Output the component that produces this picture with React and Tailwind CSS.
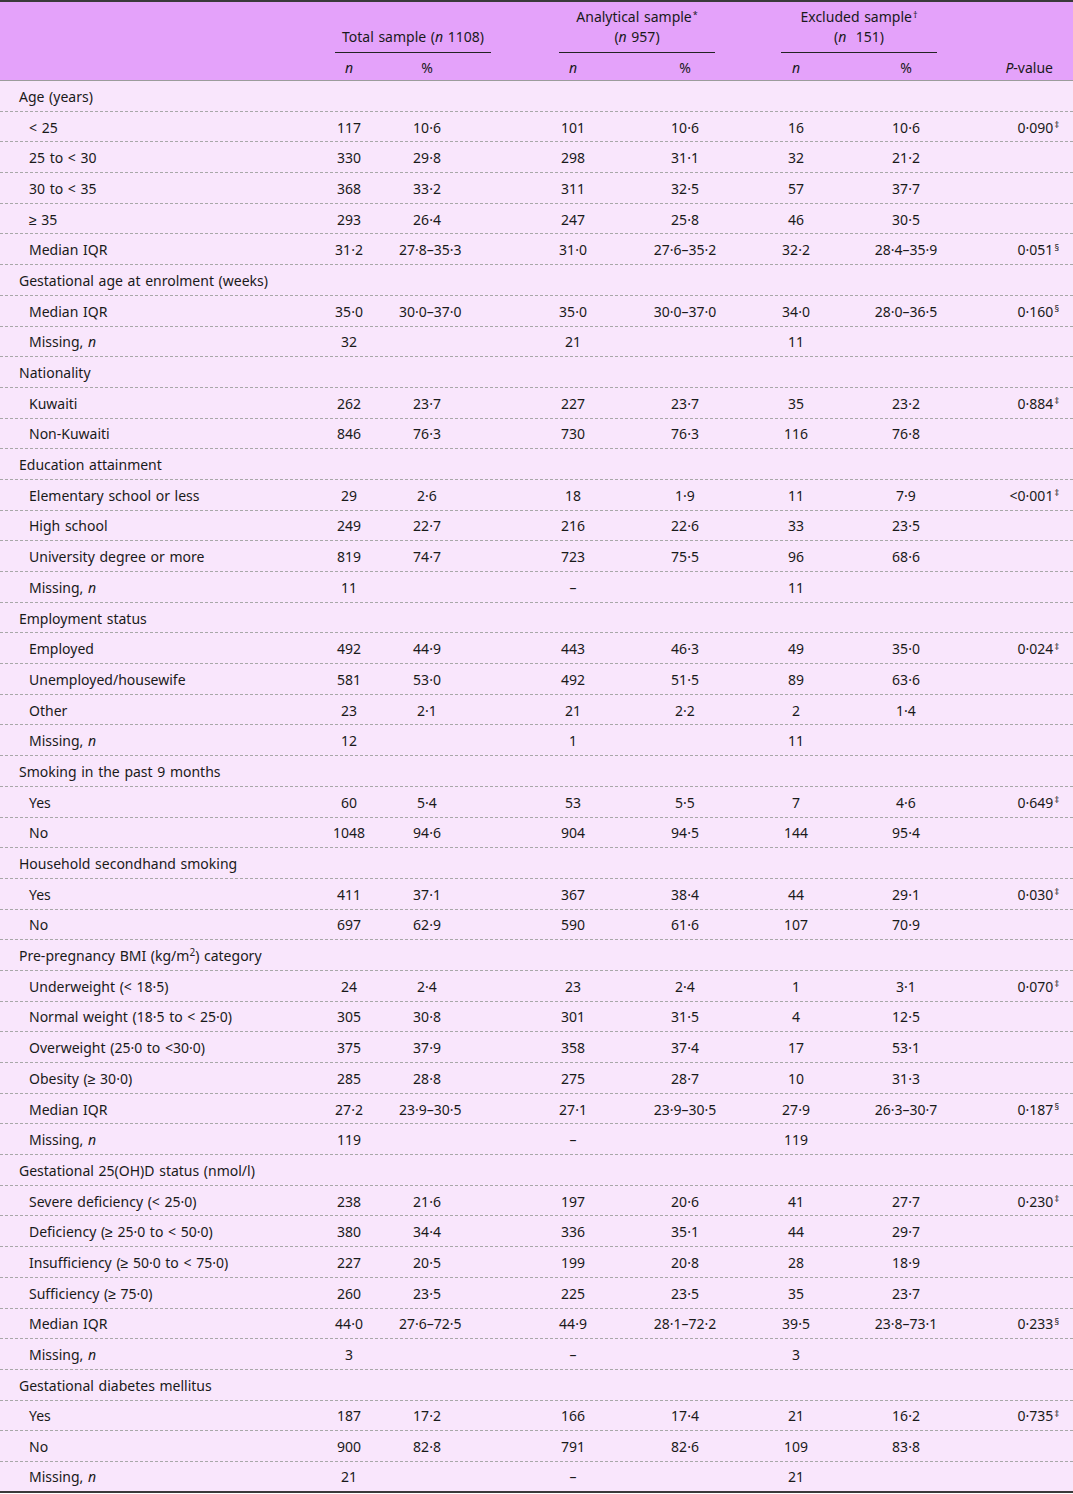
import React from 'react';

// Sociodemographic table: total, analytical and excluded samples.
const rows = [
  { label: 'Age (years)', head: true },
  { label: '< 25', v: ['117', '10·6', '101', '10·6', '16', '10·6'], p: '0·090', sup: '‡' },
  { label: '25 to < 30', v: ['330', '29·8', '298', '31·1', '32', '21·2'] },
  { label: '30 to < 35', v: ['368', '33·2', '311', '32·5', '57', '37·7'] },
  { label: '≥ 35', v: ['293', '26·4', '247', '25·8', '46', '30·5'] },
  { label: 'Median IQR', v: ['31·2', '27·8–35·3', '31·0', '27·6–35·2', '32·2', '28·4–35·9'], p: '0·051', sup: '§' },
  { label: 'Gestational age at enrolment (weeks)', head: true },
  { label: 'Median IQR', v: ['35·0', '30·0–37·0', '35·0', '30·0–37·0', '34·0', '28·0–36·5'], p: '0·160', sup: '§' },
  { label: 'Missing, ', italic: 'n', v: ['32', '', '21', '', '11', ''] },
  { label: 'Nationality', head: true },
  { label: 'Kuwaiti', v: ['262', '23·7', '227', '23·7', '35', '23·2'], p: '0·884', sup: '‡' },
  { label: 'Non-Kuwaiti', v: ['846', '76·3', '730', '76·3', '116', '76·8'] },
  { label: 'Education attainment', head: true },
  { label: 'Elementary school or less', v: ['29', '2·6', '18', '1·9', '11', '7·9'], p: '<0·001', sup: '‡' },
  { label: 'High school', v: ['249', '22·7', '216', '22·6', '33', '23·5'] },
  { label: 'University degree or more', v: ['819', '74·7', '723', '75·5', '96', '68·6'] },
  { label: 'Missing, ', italic: 'n', v: ['11', '', '–', '', '11', ''] },
  { label: 'Employment status', head: true },
  { label: 'Employed', v: ['492', '44·9', '443', '46·3', '49', '35·0'], p: '0·024', sup: '‡' },
  { label: 'Unemployed/housewife', v: ['581', '53·0', '492', '51·5', '89', '63·6'] },
  { label: 'Other', v: ['23', '2·1', '21', '2·2', '2', '1·4'] },
  { label: 'Missing, ', italic: 'n', v: ['12', '', '1', '', '11', ''] },
  { label: 'Smoking in the past 9 months', head: true },
  { label: 'Yes', v: ['60', '5·4', '53', '5·5', '7', '4·6'], p: '0·649', sup: '‡' },
  { label: 'No', v: ['1048', '94·6', '904', '94·5', '144', '95·4'] },
  { label: 'Household secondhand smoking', head: true },
  { label: 'Yes', v: ['411', '37·1', '367', '38·4', '44', '29·1'], p: '0·030', sup: '‡' },
  { label: 'No', v: ['697', '62·9', '590', '61·6', '107', '70·9'] },
  { label: 'bmi', head: true },
  { label: 'Underweight (< 18·5)', v: ['24', '2·4', '23', '2·4', '1', '3·1'], p: '0·070', sup: '‡' },
  { label: 'Normal weight (18·5 to < 25·0)', v: ['305', '30·8', '301', '31·5', '4', '12·5'] },
  { label: 'Overweight (25·0 to <30·0)', v: ['375', '37·9', '358', '37·4', '17', '53·1'] },
  { label: 'Obesity (≥ 30·0)', v: ['285', '28·8', '275', '28·7', '10', '31·3'] },
  { label: 'Median IQR', v: ['27·2', '23·9–30·5', '27·1', '23·9–30·5', '27·9', '26·3–30·7'], p: '0·187', sup: '§' },
  { label: 'Missing, ', italic: 'n', v: ['119', '', '–', '', '119', ''] },
  { label: 'Gestational 25(OH)D status (nmol/l)', head: true },
  { label: 'Severe deficiency (< 25·0)', v: ['238', '21·6', '197', '20·6', '41', '27·7'], p: '0·230', sup: '‡' },
  { label: 'Deficiency (≥ 25·0 to < 50·0)', v: ['380', '34·4', '336', '35·1', '44', '29·7'] },
  { label: 'Insufficiency (≥ 50·0 to < 75·0)', v: ['227', '20·5', '199', '20·8', '28', '18·9'] },
  { label: 'Sufficiency (≥ 75·0)', v: ['260', '23·5', '225', '23·5', '35', '23·7'] },
  { label: 'Median IQR', v: ['44·0', '27·6–72·5', '44·9', '28·1–72·2', '39·5', '23·8–73·1'], p: '0·233', sup: '§' },
  { label: 'Missing, ', italic: 'n', v: ['3', '', '–', '', '3', ''] },
  { label: 'Gestational diabetes mellitus', head: true },
  { label: 'Yes', v: ['187', '17·2', '166', '17·4', '21', '16·2'], p: '0·735', sup: '‡' },
  { label: 'No', v: ['900', '82·8', '791', '82·6', '109', '83·8'] },
  { label: 'Missing, ', italic: 'n', v: ['21', '', '–', '', '21', ''] },
];

// centres: 349, 427, 573, 685, 796, 906
const colWidths = ['w-[100px]', 'w-[56px]', 'w-[100px] ml-[68px]', 'w-[124px]', 'w-[98px]', 'w-[122px]'];

const Sup = ({ children }) => <sup className="ml-[1px] text-[9px]">{children}</sup>;

const Label = ({ row }) => {
  if (row.label === 'bmi') {
    return (
      <span>
        Pre-pregnancy BMI (kg/m<sup className="text-[10px]">2</sup>) category
      </span>
    );
  }
  return (
    <span>
      {row.label}
      {row.italic ? <i>{row.italic}</i> : null}
    </span>
  );
};

const Group = ({ width, top, bottom }) => (
  <div className={`${width} flex flex-col items-center justify-end`}>
    {top ? <div className="h-[20px] leading-[20px]">{top}</div> : null}
    <div className="h-[20px] leading-[20px]">{bottom}</div>
    <div className="mt-[5px] h-px w-[156px] bg-[#222]" />
  </div>
);

export default function App() {
  return (
    <div
      className="w-[1073px] whitespace-nowrap bg-[#f9e6fc] text-[14px] text-[#1a1a1a] [word-spacing:1px]"
      style={{ fontFamily: '"Noto Sans", sans-serif' }}
    >
      <div className="border-t-2 border-[#3a3a3a] bg-[#e4a2fa]">
        <div className="flex pt-[5px]">
          <div className="w-[299px]" />
          <Group
            width="w-[228px]"
            bottom={
              <>
                Total sample (<i>n</i> 1108)
              </>
            }
          />
          <Group
            width="w-[220px]"
            top={
              <>
                Analytical sample<Sup>*</Sup>
              </>
            }
            bottom={
              <>
                (<i>n</i> 957)
              </>
            }
          />
          <Group
            width="w-[224px]"
            top={
              <>
                Excluded sample<Sup>†</Sup>
              </>
            }
            bottom={
              <>
                (<i>n</i>&nbsp; 151)
              </>
            }
          />
        </div>
        <div className="flex h-[28px] items-center border-b border-[#9c9c9c] pt-px">
          <div className="w-[299px]" />
          {['n', '%', 'n', '%', 'n', '%'].map((h, i) => (
            <div key={i} className={`${colWidths[i]} text-center`}>
              {h === 'n' ? <i>n</i> : h}
            </div>
          ))}
          <div className="flex-1 pr-[20px] text-right">
            <i>P</i>-value
          </div>
        </div>
      </div>

      {rows.map((row, idx) => {
        const last = idx === rows.length - 1;
        return (
          <div
            key={idx}
            className={`flex h-[30.7px] items-center pt-px ${
              last ? 'border-b-2 border-solid border-[#3a3a3a]' : 'border-b border-dashed border-[#a8a8a8]'
            }`}
          >
            <div className={`w-[299px] ${row.head ? 'pl-[19px]' : 'pl-[29px]'}`}>
              <Label row={row} />
            </div>
            {row.v
              ? row.v.map((val, i) => (
                  <div key={i} className={`${colWidths[i]} text-center`}>
                    {val}
                  </div>
                ))
              : null}
            {row.p ? (
              <div className="flex-1 pr-[14px] text-right">
                {row.p}
                <Sup>{row.sup}</Sup>
              </div>
            ) : null}
          </div>
        );
      })}
    </div>
  );
}
